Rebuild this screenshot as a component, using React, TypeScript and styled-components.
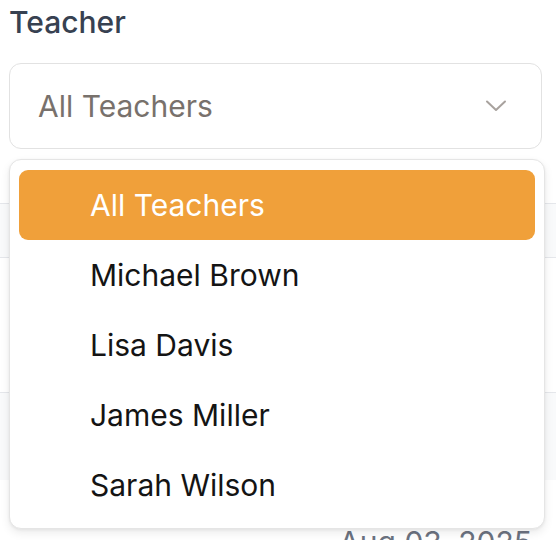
import React from "react";
import styled, { createGlobalStyle } from "styled-components";

const Global = createGlobalStyle`
  html, body { margin: 0; padding: 0; background: #ffffff; }
  body { font-family: Inter, "Noto Sans", sans-serif; width: 556px; height: 540px; overflow: hidden; }
  * { box-sizing: border-box; }
`;

const Page = styled.div`
  position: relative;
  width: 556px;
  height: 540px;
  overflow: hidden;
`;

const Field = styled.div`
  padding: 0 14px 0 9px;
  display: flex;
  flex-direction: column;
`;

const Label = styled.div`
  font-size: 30px;
  font-weight: 500;
  line-height: 44px;
  color: #374151;
  margin-bottom: 19px;
`;

const Trigger = styled.div`
  height: 86px;
  border: 1px solid #e2e2e2;
  border-radius: 12px;
  display: flex;
  align-items: center;
  justify-content: space-between;
  padding: 0 34px 0 28px;
  color: #78716c;
  font-size: 30px;
`;

const Table = styled.div`
  margin-top: 54px;
  display: flex;
  flex-direction: column;
`;

const Row = styled.div<{ $h: number; $bg?: string; $border?: boolean }>`
  height: ${(p) => p.$h}px;
  background: ${(p) => p.$bg || "#ffffff"};
  border-bottom: ${(p) => (p.$border ? "1px solid #e5e7eb" : "none")};
  display: flex;
  justify-content: flex-end;
  align-items: flex-end;
`;

const HeaderRow = styled(Row)`
  border-top: 1px solid #e5e7eb;
`;

const DateText = styled.div`
  font-size: 30px;
  color: #6b7280;
  padding-right: 24px;
  line-height: 36px;
  transform: translateY(20px);
`;

const Menu = styled.div`
  position: absolute;
  left: 9px;
  top: 159px;
  width: 536px;
  height: 370px;
  background: #ffffff;
  border: 1px solid #e5e5e5;
  border-radius: 12px;
  box-shadow: 0 4px 10px rgba(0, 0, 0, 0.08), 0 1px 3px rgba(0, 0, 0, 0.06);
  padding: 10px 9px;
  display: flex;
  flex-direction: column;
`;

const Item = styled.div<{ $active?: boolean }>`
  height: 70px;
  flex: 0 0 70px;
  border-radius: 9px;
  display: flex;
  align-items: center;
  padding-left: 71px;
  font-size: 30px;
  color: ${(p) => (p.$active ? "#ffffff" : "#141414")};
  background: ${(p) => (p.$active ? "#f0a03a" : "transparent")};
`;

const Chevron = () => (
  <svg width="22" height="14" viewBox="0 0 22 14" fill="none">
    <path d="M2 2.5 L11 11 L20 2.5" stroke="#a8a29e" strokeWidth="2" strokeLinecap="round" strokeLinejoin="round" />
  </svg>
);

const teachers = ["All Teachers", "Michael Brown", "Lisa Davis", "James Miller", "Sarah Wilson"];

export default function App() {
  return (
    <Page>
      <Global />
      <Field>
        <Label>Teacher</Label>
        <Trigger>
          <span>All Teachers</span>
          <Chevron />
        </Trigger>
      </Field>
      <Table>
        <HeaderRow $h={55} $bg="#f9fafb" $border />
        <Row $h={135} $border />
        <Row $h={87} $bg="#f9fafb" />
        <Row $h={60}>
          <DateText>Aug 03, 2025</DateText>
        </Row>
      </Table>
      <Menu>
        {teachers.map((t, i) => (
          <Item key={t} $active={i === 0}>
            {t}
          </Item>
        ))}
      </Menu>
    </Page>
  );
}
